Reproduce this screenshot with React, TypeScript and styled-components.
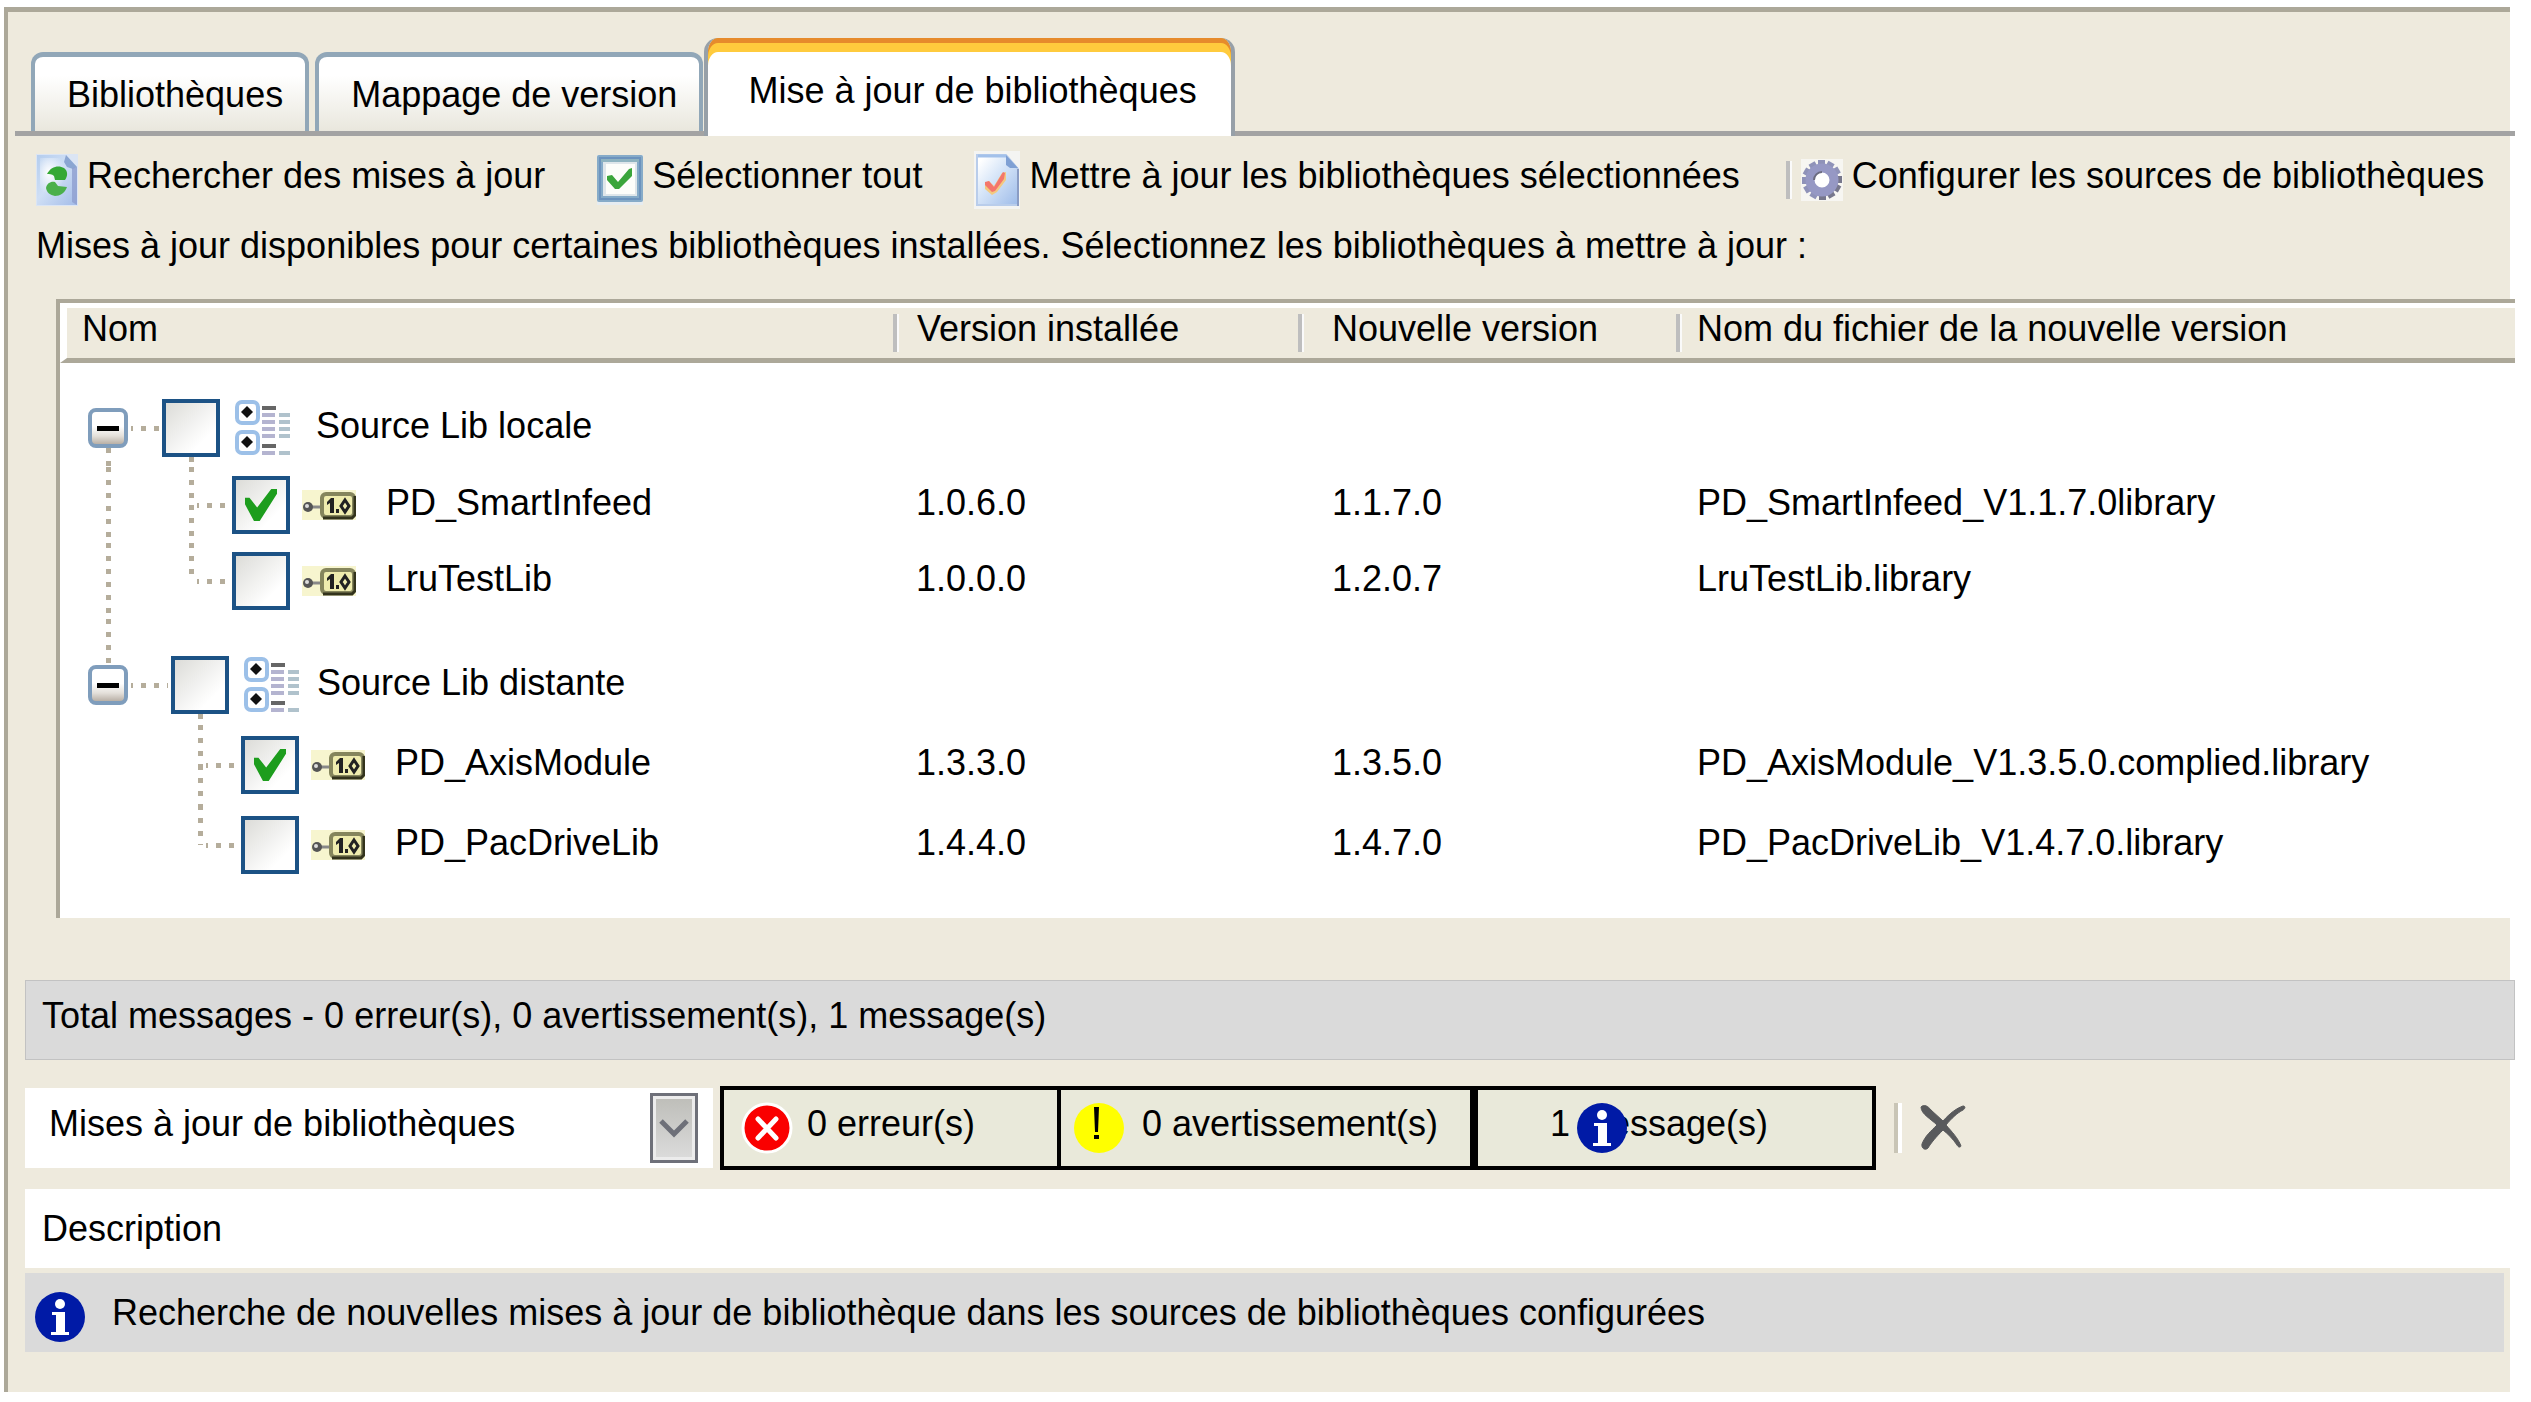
import React, { useState } from "react";
import styled, { createGlobalStyle, css } from "styled-components";

const color = {
  face: "#eeeadd",
  shadow: "#aca899",
  rule: "#a3a3a3",
  tabEdge: "#91a7b8",
  bar: "#dadada",
  box: "#1c5285",
  dot: "#b5ad9b",
};

const GlobalStyle = createGlobalStyle`
  * { box-sizing: border-box; }
  body { margin: 0; background: #fff; }
  body, button, select, input, table {
    font-family: "Liberation Sans", Arial, sans-serif;
    font-size: 36px;
    line-height: 50px;
    color: #000;
  }
`;

const Page = styled.div`
  padding: 7px 21px 8px 4px;
`;

const Panel = styled.main`
  background: ${color.face};
  border-top: 5px solid ${color.shadow};
  border-left: 4px solid ${color.shadow};
  padding-bottom: 40px;
`;

const TabStrip = styled.div`
  display: flex;
  align-items: flex-end;
  margin: 0 -5px 0 7px;
  padding: 26px 0 0 16px;
  border-bottom: 5px solid ${color.rule};
`;

const Tab = styled.button<{ $active?: boolean }>`
  border: 4px solid ${color.tabEdge};
  border-width: 5px 4px 0;
  border-radius: 12px 12px 0 0;
  margin: 0 6px 0 0;
  height: 79px;
  padding: 2px 22px 0 32px;
  background: linear-gradient(#fff 25%, #e9e7dd);
  white-space: nowrap;
  & + & {
    margin-right: 1px;
  }
  ${(p) =>
    p.$active &&
    css`
      border: 0;
      border-left: 4px solid #97a0a8;
      border-right: 4px solid #97a0a8;
      border-radius: 14px 14px 0 0;
      height: 98px;
      margin-bottom: -5px;
      padding: 8px 34px 0 40px;
      background: #fff;
      box-shadow: inset 0 5px #e68b2c, inset 0 14px #ffcb3d;
    `}
`;

const Raised = styled.span`
  padding-bottom: 8px;
  white-space: nowrap;
`;

const Toolbar = styled.div`
  display: flex;
  align-items: center;
  height: 60px;
  margin-top: 14px;
  padding-left: 28px;
  gap: 52px;
`;

const ToolButton = styled.button`
  display: flex;
  align-items: center;
  gap: 9px;
  padding: 0;
  border: 0;
  background: none;
  svg { flex: none; display: block; }
`;

const ToolGroup = styled.div`
  display: flex;
  align-items: center;
  gap: 9px;
  margin-left: -6px;
`;

const Divider = styled.span`
  flex: none;
  width: 6px;
  height: 38px;
  border-left: 4px solid #bebebe;
  border-right: 2px solid #fafafa;
`;

const Notice = styled.p`
  margin: 11px 0 28px 28px;
`;

const TableFrame = styled.div`
  margin: 0 -5px 0 48px;
  border-top: 4px solid ${color.shadow};
  border-left: 4px solid ${color.shadow};
  background: #fff;
  padding-bottom: 33px;
`;

const Table = styled.table`
  width: 100%;
  table-layout: fixed;
  border-collapse: separate;
  border-spacing: 0;
`;

const Col = styled.col<{ $w?: number }>`
  ${(p) => p.$w && `width: ${p.$w}px;`}
`;

const Th = styled.th<{ $first?: boolean }>`
  padding: 0;
  font-weight: 400;
  text-align: left;
  background: ${color.face};
  border-top: 5px solid #fff;
  border-bottom: 5px solid ${color.shadow};
  ${(p) => p.$first && "border-left: 7px solid #fff;"}
`;

const HeadInner = styled.div<{ $gap: number }>`
  display: flex;
  align-items: center;
  height: 50px;
  gap: ${(p) => p.$gap}px;
`;

const Td = styled.td<{ $pad?: number }>`
  padding: 0 0 4px ${(p) => p.$pad ?? 0}px;
  white-space: nowrap;
`;

const TreeTd = styled.td`
  padding: 0;
`;

const TreeLine = styled.div<{ $h: number }>`
  display: flex;
  align-items: center;
  height: ${(p) => p.$h}px;
  padding-left: 28px;
`;

const vDots = `repeating-linear-gradient(to bottom, ${color.dot} 0 5px, transparent 5px 13px)`;
const hDots = `repeating-linear-gradient(to right, ${color.dot} 0 5px, transparent 5px 13px)`;

const Stack = styled.div<{ $w: number }>`
  display: flex;
  flex-direction: column;
  align-items: center;
  align-self: stretch;
  flex: none;
  width: ${(p) => p.$w}px;
`;

const VLine = styled.span<{ $on?: boolean }>`
  flex: 1;
  width: 5px;
  background: ${(p) => (p.$on ? vDots : "none")};
`;

const HLine = styled.span<{ $w: number }>`
  flex: none;
  width: ${(p) => p.$w}px;
  height: 5px;
  background: ${hDots};
  background-clip: content-box;
  padding: 0 3px;
`;

const Elbow = styled(HLine)`
  margin-left: -26px;
`;

const Gap = styled.span<{ $w: number }>`
  flex: none;
  width: ${(p) => p.$w}px;
`;

const Expander = styled.button`
  flex: none;
  display: grid;
  place-items: center;
  width: 40px;
  height: 40px;
  padding: 0;
  border: 4px solid #7f9dbc;
  border-radius: 8px;
  background: linear-gradient(#fff 45%, #e4e0da 75%, #b9b0a6);
  &::before {
    content: "";
    width: 22px;
    height: 5px;
    background: #000;
  }
`;

const Box = styled.input.attrs({ type: "checkbox" })`
  appearance: none;
  flex: none;
  width: 58px;
  height: 58px;
  margin: 0;
  border: 4px solid ${color.box};
  background: linear-gradient(135deg, #dcdcd8, #fff 75%);
  &:checked::before {
    content: "";
    display: block;
    width: 32px;
    height: 32px;
    margin: 9px;
    background: #1d9d1d;
    clip-path: polygon(0 27%, 14% 27%, 38% 58%, 82% 0, 100% 0, 100% 15%, 46% 100%, 28% 100%, 0 48%);
  }
`;

const ItemLabel = styled.label`
  padding-bottom: 4px;
  white-space: nowrap;
`;

const SummaryBar = styled.div`
  display: flex;
  align-items: center;
  height: 80px;
  margin: 62px -5px 26px 17px;
  padding-left: 16px;
  background: ${color.bar};
  border: 1px solid #c2c2c2;
`;

const FilterRow = styled.div`
  display: flex;
  align-items: center;
  margin: 0 0 19px 17px;
`;

const Picker = styled.div`
  position: relative;
  flex: none;
  width: 688px;
  height: 80px;
  margin-right: 7px;
`;

const Select = styled.select`
  appearance: none;
  width: 100%;
  height: 100%;
  padding: 0 70px 8px 24px;
  border: 0;
  border-radius: 0;
  background: #fff;
`;

const PickerArrow = styled.span`
  position: absolute;
  top: 5px;
  right: 15px;
  width: 48px;
  height: 70px;
  display: grid;
  place-items: center;
  border: 3px solid #6e7079;
  background: linear-gradient(#bdbdb8, #dcdcdc);
  box-shadow: inset 0 0 0 3px #ececec;
  pointer-events: none;
`;

const Counter = styled.button<{ $w: number }>`
  position: relative;
  display: flex;
  align-items: center;
  flex: none;
  width: ${(p) => p.$w}px;
  height: 84px;
  padding: 0 0 0 17px;
  border: 4px solid #000;
  background: #e9e9da;
  gap: 14px;
  svg { flex: none; }
`;

const WarnCounter = styled(Counter)`
  padding-left: 13px;
  margin-left: -4px;
  gap: 18px;
`;

const InfoCounter = styled(Counter)`
  padding-left: 72px;
  svg {
    position: absolute;
    left: 99px;
    top: 13px;
  }
`;

const WideDivider = styled.span`
  flex: none;
  width: 8px;
  height: 50px;
  margin: 0 18px;
  border-left: 4px solid #c9c5b6;
  border-right: 4px solid #fff;
`;

const ClearButton = styled.button`
  padding: 0;
  border: 0;
  background: none;
  display: block;
  svg { display: block; }
`;

const DescriptionHead = styled.div`
  display: flex;
  align-items: center;
  height: 79px;
  margin-left: 17px;
  padding-left: 17px;
  background: #fff;
`;

const DescriptionRow = styled.div`
  display: flex;
  align-items: center;
  height: 79px;
  margin: 5px 6px 0 17px;
  padding: 8px 0 0 10px;
  gap: 27px;
  background: ${color.bar};
`;

function RefreshPageIcon() {
  return (
    <svg width="42" height="52" viewBox="0 0 42 52">
      <defs>
        <linearGradient id="rp" x1="0" y1="0" x2="1" y2="1">
          <stop offset="0" stopColor="#b4cdee" />
          <stop offset=".45" stopColor="#cfdff5" />
          <stop offset="1" stopColor="#a3bce8" />
        </linearGradient>
        <radialGradient id="rg" cx=".35" cy=".4" r=".6">
          <stop offset="0" stopColor="#fff" />
          <stop offset="1" stopColor="#fff" stopOpacity="0" />
        </radialGradient>
      </defs>
      <rect width="42" height="52" fill="#dbe5f4" />
      <path d="M1 1h29l11 12v38H1z" fill="url(#rp)" />
      <path d="M4 4h26v36H4z" fill="url(#rg)" />
      <path d="M30 1l11 12-4 2-6-2-3-5z" fill="#8ba6d2" />
      <path d="M36 14l5-1v38l-5-3z" fill="#8f9fd0" opacity=".8" />
      <path d="M11 20c4-8 12-9 17-6 4 3 4 8 1 12H19l-1-4c-2-2-5-2-7-2z" fill="#35a835" />
      <path d="M10 34c1-5 5-7 9-6l3 4 9 1c-2 6-7 9-12 9-5-1-8-3-9-8z" fill="#4bb04b" />
    </svg>
  );
}

function CheckBoxIcon() {
  return (
    <svg width="46" height="50" viewBox="0 0 46 50">
      <rect width="46" height="50" fill="#e6ecf0" />
      <rect x="0" y="0" width="46" height="47" rx="2" fill="#86abc8" />
      <path d="M2 2h42v5H2z" fill="#8fb3c0" />
      <rect x="3" y="3" width="40" height="41" fill="none" stroke="#6c93bd" strokeWidth="2" />
      <rect x="6" y="7" width="34" height="34" fill="#dfe6ea" />
      <rect x="9" y="9" width="29" height="30" fill="#fdfdfa" />
      <path d="M10 21l5-1 6 7L32 14l3-1v8L22 34h-4l-8-9z" fill="#3ba53b" />
    </svg>
  );
}

function ApplyPageIcon() {
  return (
    <svg width="46" height="58" viewBox="0 0 46 58">
      <defs>
        <linearGradient id="ap" x1="0" y1="0" x2="1" y2="1">
          <stop offset=".1" stopColor="#fff" />
          <stop offset=".45" stopColor="#d6e5f8" />
          <stop offset="1" stopColor="#9dbbe9" />
        </linearGradient>
      </defs>
      <rect width="46" height="58" fill="#f4f4f2" />
      <path d="M3 4h29l12 14v36H3z" fill="url(#ap)" stroke="#b9cdeb" strokeWidth="2" />
      <path d="M4 5h28" stroke="#a3c1ea" strokeWidth="3" />
      <path d="M32 4v10l4 3h8z" fill="#7fa0d4" />
      <path d="M44 18v37" stroke="#8a9cc4" strokeWidth="2" />
      <path d="M11 32l4-2 5 5 8-13 4-1v8l-9 12-5 3-7-6z" fill="#f3c980" />
      <path d="M11 31l4-1 5 6 9-15 2 1-1 6-9 12-3 1-7-7z" fill="#f4766c" />
    </svg>
  );
}

function GearIcon() {
  const teeth = Array.from({ length: 12 }, (_, i) => i * 30);
  return (
    <svg width="42" height="42" viewBox="0 0 42 42">
      <rect width="42" height="42" fill="#f7f6f2" />
      {teeth.map((a) => (
        <rect key={a} x="17" y="1" width="7" height="9" fill={a > 60 && a < 200 ? "#77778c" : "#8f92b8"} transform={`rotate(${a} 21 21)`} />
      ))}
      <circle cx="21" cy="21" r="12" fill="#fff" stroke="#9698c4" strokeWidth="9" />
      <path d="M13 21a8 8 0 0 1 8-8" fill="none" stroke="#6c6c80" strokeWidth="2" />
    </svg>
  );
}

function SourceIcon() {
  return (
    <svg width="55" height="56" viewBox="0 0 55 56">
      {[0, 30].map((y) => (
        <g key={y} transform={`translate(0 ${y})`}>
          <rect x="2" y="2" width="21" height="21" rx="5" fill="#fff" stroke="#9cc0e8" strokeWidth="4" />
          <path d="M12 6l6 6-6 6-6-6z" fill="#111" />
        </g>
      ))}
      <path d="M27 8h14M27 46h14" stroke="#666" strokeWidth="4" />
      <path d="M27 15h13M27 22h13M27 29h13M27 36h13M27 53h13" stroke="#b4b4d0" strokeWidth="4" />
      <path d="M44 15h11M44 22h11M44 29h11M44 36h11M44 53h11" stroke="#b0c2cc" strokeWidth="4" />
    </svg>
  );
}

function VersionIcon() {
  return (
    <svg width="54" height="30" viewBox="0 0 54 30">
      <rect width="54" height="30" fill="#f7f5cf" />
      <path d="M8 17h10" stroke="#888" strokeWidth="3" />
      <circle cx="6" cy="17" r="5" fill="#555" />
      <circle cx="5" cy="16" r="2" fill="#ddd" />
      <rect x="20" y="4" width="32" height="23" rx="4" fill="#efecae" stroke="#85855c" strokeWidth="4" />
      <path d="M21 28h29l3-3V6" fill="none" stroke="#33331c" strokeWidth="3" />
      <path d="M25 12l4-4h3v15h-4V13l-3 2zM34 19h3v4h-3z" fill="#222" />
      <path d="M43 10l4 6-4 6-4-6z" fill="none" stroke="#222" strokeWidth="3" />
    </svg>
  );
}

function ErrorIcon() {
  return (
    <svg width="52" height="52" viewBox="0 0 52 52">
      <circle cx="26" cy="26" r="24" fill="#fa0000" stroke="#fff" strokeWidth="3" />
      <path d="M17 17l18 19M35 17L17 36" stroke="#fff" strokeWidth="5" strokeLinecap="round" />
    </svg>
  );
}

function WarningIcon() {
  return (
    <svg width="50" height="50" viewBox="0 0 50 50">
      <circle cx="25" cy="25" r="25" fill="#ff0" />
      <path d="M20 4h5l-1 25h-3zM20 32h5v4h-5z" fill="#000" />
    </svg>
  );
}

function InfoIcon() {
  return (
    <svg width="50" height="50" viewBox="0 0 50 50">
      <circle cx="25" cy="25" r="25" fill="#001aa6" />
      <circle cx="25" cy="12" r="5" fill="#fff" />
      <path d="M17 20h13v20h4v3H16v-3h5V23h-4z" fill="#fff" />
    </svg>
  );
}

function ClearIcon() {
  return (
    <svg width="46" height="46" viewBox="0 0 46 46">
      <path d="M1 2C4-1 8 1 11 5l12 11C30 8 37 3 43 1c3 0 2 3 0 4-6 3-12 9-17 15 6 7 12 13 15 21-1 2-3 1-4-1-4-6-9-11-14-15C16 32 11 38 8 43c-3 3-7 0-6-4 3-8 9-13 15-19C11 14 1 9 1 2z" fill="#595a5c" stroke="#595a5c" strokeWidth="1" />
    </svg>
  );
}

type Lib = { name: string; installed: string; next: string; file: string; checked: boolean };
type Source = { name: string; indent: number; labelGap: number; rowHeight: number; libs: Lib[] };

const sources: Source[] = [
  {
    name: "Source Lib locale",
    indent: 34,
    labelGap: 26,
    rowHeight: 76,
    libs: [
      { name: "PD_SmartInfeed", installed: "1.0.6.0", next: "1.1.7.0", file: "PD_SmartInfeed_V1.1.7.0library", checked: true },
      { name: "LruTestLib", installed: "1.0.0.0", next: "1.2.0.7", file: "LruTestLib.library", checked: false },
    ],
  },
  {
    name: "Source Lib distante",
    indent: 43,
    labelGap: 18,
    rowHeight: 80,
    libs: [
      { name: "PD_AxisModule", installed: "1.3.3.0", next: "1.3.5.0", file: "PD_AxisModule_V1.3.5.0.complied.library", checked: true },
      { name: "PD_PacDriveLib", installed: "1.4.4.0", next: "1.4.7.0", file: "PD_PacDriveLib_V1.4.7.0.library", checked: false },
    ],
  },
];

function SourceRows({ source, first, last }: { source: Source; first: boolean; last: boolean }) {
  const id = source.name.replace(/\s/g, "-");
  return (
    <tbody>
      <tr>
        <TreeTd colSpan={4}>
          <TreeLine $h={26}>
            <Stack $w={40}>
              <VLine $on={!first} />
            </Stack>
          </TreeLine>
        </TreeTd>
      </tr>
      <tr>
        <TreeTd>
          <TreeLine $h={first ? 78 : 80}>
            <Stack $w={40}>
              <VLine $on={!first} />
              <Expander aria-label={`Réduire ${source.name}`} />
              <VLine $on={!last} />
            </Stack>
            <HLine $w={source.indent} />
            <Stack $w={58}>
              <VLine />
              <Box id={id} />
              <VLine $on />
            </Stack>
            <Gap $w={15} />
            <SourceIcon />
            <Gap $w={source.labelGap} />
            <ItemLabel htmlFor={id}>{source.name}</ItemLabel>
          </TreeLine>
        </TreeTd>
        <Td />
        <Td />
        <Td />
      </tr>
      {source.libs.map((lib, i) => (
        <tr key={lib.name}>
          <TreeTd>
            <TreeLine $h={source.rowHeight}>
              <Stack $w={40}>
                <VLine $on={!last} />
              </Stack>
              <Gap $w={source.indent} />
              <Stack $w={58}>
                <VLine $on />
                <VLine $on={i < source.libs.length - 1} />
              </Stack>
              <Elbow $w={38} />
              <Box id={lib.name} defaultChecked={lib.checked} />
              <Gap $w={12} />
              <VersionIcon />
              <Gap $w={30} />
              <ItemLabel htmlFor={lib.name}>{lib.name}</ItemLabel>
            </TreeLine>
          </TreeTd>
          <Td $pad={23}>{lib.installed}</Td>
          <Td $pad={34}>{lib.next}</Td>
          <Td $pad={21}>{lib.file}</Td>
        </tr>
      ))}
    </tbody>
  );
}

const tabs = ["Bibliothèques", "Mappage de version", "Mise à jour de bibliothèques"];

export default function App() {
  const [tab, setTab] = useState(2);
  return (
    <Page>
      <GlobalStyle />
      <Panel>
        <TabStrip role="tablist">
          {tabs.map((t, i) => (
            <Tab key={t} role="tab" aria-selected={i === tab} $active={i === tab} onClick={() => setTab(i)}>
              {t}
            </Tab>
          ))}
        </TabStrip>
        <Toolbar>
          <ToolButton>
            <RefreshPageIcon />
            <Raised>Rechercher des mises à jour</Raised>
          </ToolButton>
          <ToolButton>
            <CheckBoxIcon />
            <Raised>Sélectionner tout</Raised>
          </ToolButton>
          <ToolButton>
            <ApplyPageIcon />
            <Raised>Mettre à jour les bibliothèques sélectionnées</Raised>
          </ToolButton>
          <ToolGroup>
            <Divider />
            <ToolButton>
              <GearIcon />
              <Raised>Configurer les sources de bibliothèques</Raised>
            </ToolButton>
          </ToolGroup>
        </Toolbar>
        <Notice>Mises à jour disponibles pour certaines bibliothèques installées. Sélectionnez les bibliothèques à mettre à jour :</Notice>
        <TableFrame>
          <Table>
            <colgroup>
              <Col $w={833} />
              <Col $w={405} />
              <Col $w={378} />
              <Col />
            </colgroup>
            <thead>
              <tr>
                <Th $first>
                  <HeadInner $gap={15}>
                    <span />
                    <Raised>Nom</Raised>
                  </HeadInner>
                </Th>
                <Th>
                  <HeadInner $gap={18}>
                    <Divider />
                    <Raised>Version installée</Raised>
                  </HeadInner>
                </Th>
                <Th>
                  <HeadInner $gap={28}>
                    <Divider />
                    <Raised>Nouvelle version</Raised>
                  </HeadInner>
                </Th>
                <Th>
                  <HeadInner $gap={15}>
                    <Divider />
                    <Raised>Nom du fichier de la nouvelle version</Raised>
                  </HeadInner>
                </Th>
              </tr>
            </thead>
            {sources.map((s, i) => (
              <SourceRows key={s.name} source={s} first={i === 0} last={i === sources.length - 1} />
            ))}
          </Table>
        </TableFrame>
        <SummaryBar>
          <Raised>Total messages - 0 erreur(s), 0 avertissement(s), 1 message(s)</Raised>
        </SummaryBar>
        <FilterRow>
          <Picker>
            <Select aria-label="Catégorie de messages">
              <option>Mises à jour de bibliothèques</option>
            </Select>
            <PickerArrow>
              <svg width="32" height="20" viewBox="0 0 32 20">
                <path d="M3 3l13 13L29 3" fill="none" stroke="#6e7079" strokeWidth="5" />
              </svg>
            </PickerArrow>
          </Picker>
          <Counter $w={341}>
            <ErrorIcon />
            <Raised>0 erreur(s)</Raised>
          </Counter>
          <WarnCounter $w={417}>
            <WarningIcon />
            <Raised>0 avertissement(s)</Raised>
          </WarnCounter>
          <InfoCounter $w={402}>
            <Raised>1 message(s)</Raised>
            <InfoIcon />
          </InfoCounter>
          <WideDivider />
          <ClearButton aria-label="Effacer les messages">
            <ClearIcon />
          </ClearButton>
        </FilterRow>
        <DescriptionHead>Description</DescriptionHead>
        <DescriptionRow>
          <InfoIcon />
          <Raised>Recherche de nouvelles mises à jour de bibliothèque dans les sources de bibliothèques configurées</Raised>
        </DescriptionRow>
      </Panel>
    </Page>
  );
}
